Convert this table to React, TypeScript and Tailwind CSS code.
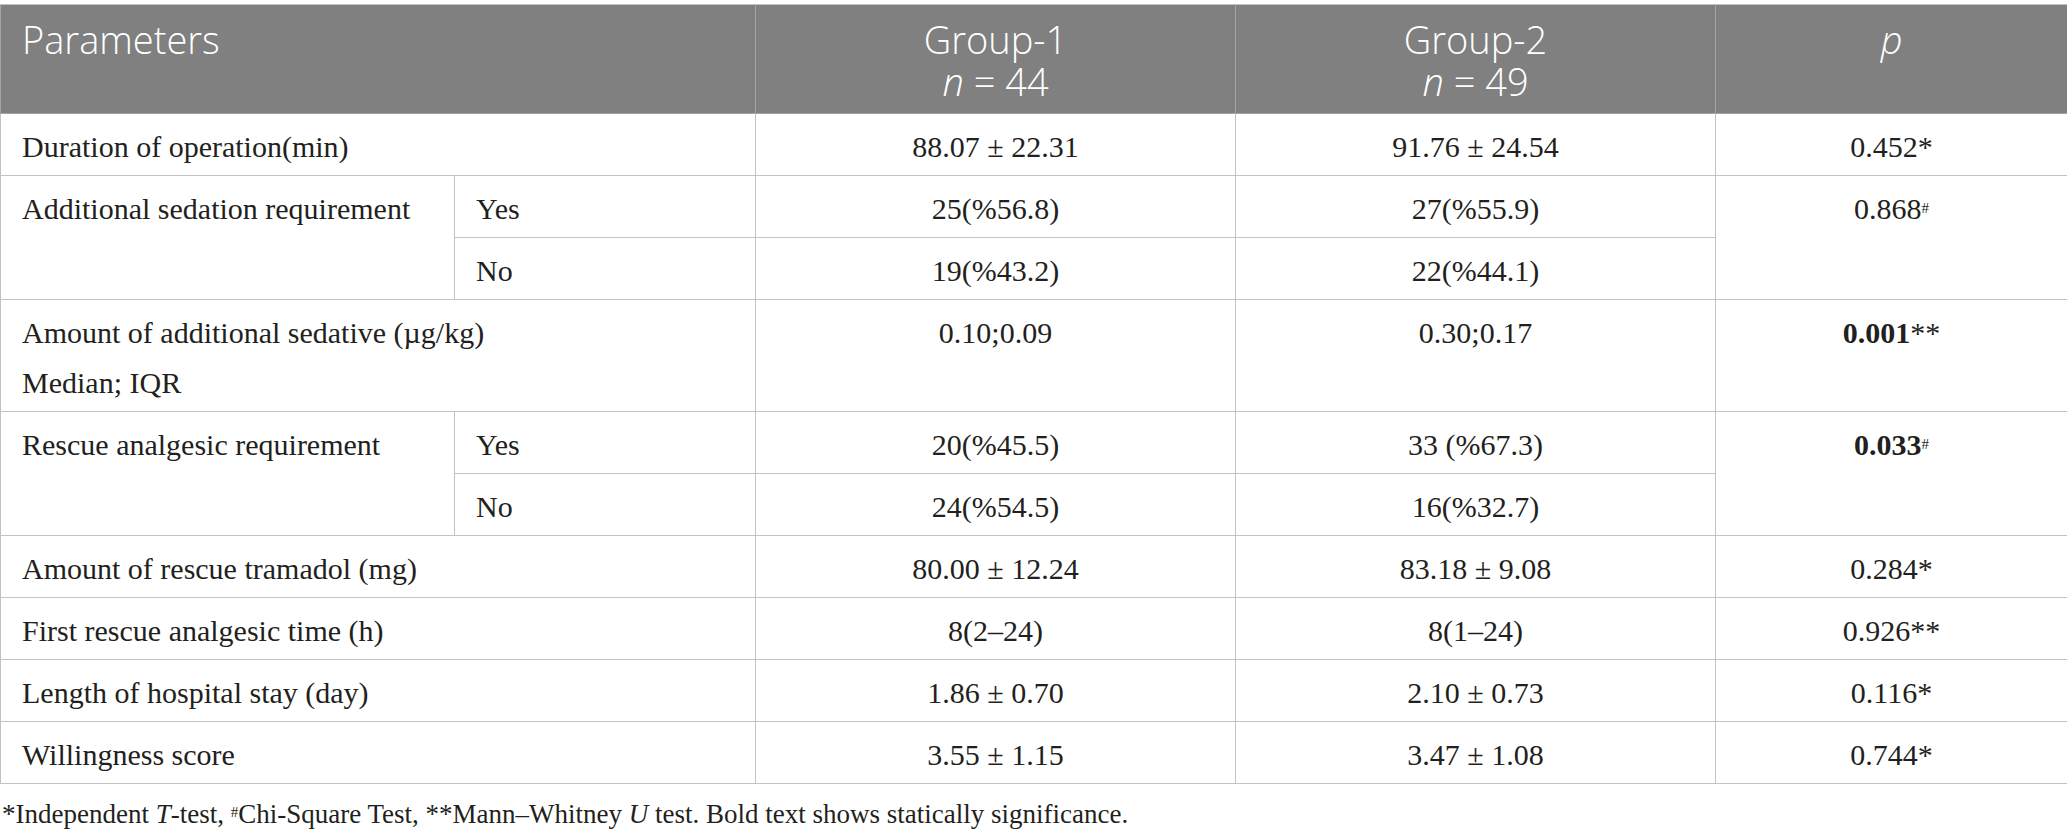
import React from "react";

const serif = "font-['Liberation_Serif','Times_New_Roman',serif]";
const sans = "font-['Open_Sans','Noto_Sans',sans-serif]";

const cell =
  "border border-[#c2c2c2] align-top pt-[8px] pb-[3px] leading-[50px] text-[30px] text-[#231f20]";
const label = `${cell} pl-[21px] text-left`;
const value = `${cell} text-center`;

const Hash = () => (
  <sup className="text-[15px] relative -top-[6px] align-baseline">#</sup>
);

type Row = { name: string; g1: string; g2: string; p: React.ReactNode };

const simpleRows: Row[] = [
  { name: "Amount of rescue tramadol (mg)", g1: "80.00 ± 12.24", g2: "83.18 ± 9.08", p: "0.284*" },
  { name: "First rescue analgesic time (h)", g1: "8(2–24)", g2: "8(1–24)", p: "0.926**" },
  { name: "Length of hospital stay (day)", g1: "1.86 ± 0.70", g2: "2.10 ± 0.73", p: "0.116*" },
  { name: "Willingness score", g1: "3.55 ± 1.15", g2: "3.47 ± 1.08", p: "0.744*" },
];

export default function App() {
  return (
    <div className={`w-[2067px] min-h-[837px] bg-white pt-[4px] ${serif}`}>
      <table className="w-[2067px] table-fixed border-collapse">
        <colgroup>
          <col className="w-[454px]" />
          <col className="w-[301px]" />
          <col className="w-[480px]" />
          <col className="w-[480px]" />
          <col className="w-[352px]" />
        </colgroup>
        <thead>
          <tr className={`bg-[#7f807f] text-white ${sans} font-light text-[38px] leading-[42px]`}>
            <th
              colSpan={2}
              className="border border-[#a3a3a3] border-t-[#c2c2c2] align-top text-left font-light pl-[21px] pt-[13px] pb-[11px]"
            >
              Parameters
            </th>
            <th className="border border-[#a3a3a3] border-t-[#c2c2c2] align-top font-light pt-[13px] pb-[11px]">
              Group-1
              <br />
              <i>n</i> = 44
            </th>
            <th className="border border-[#a3a3a3] border-t-[#c2c2c2] align-top font-light pt-[13px] pb-[11px]">
              Group-2
              <br />
              <i>n</i> = 49
            </th>
            <th className="border border-[#a3a3a3] border-t-[#c2c2c2] align-top font-light pt-[13px] pb-[11px]">
              <i>p</i>
            </th>
          </tr>
        </thead>
        <tbody>
          <tr>
            <td colSpan={2} className={label}>
              Duration of operation(min)
            </td>
            <td className={value}>88.07 ± 22.31</td>
            <td className={value}>91.76 ± 24.54</td>
            <td className={value}>0.452*</td>
          </tr>

          <tr>
            <td rowSpan={2} className={label}>
              Additional sedation requirement
            </td>
            <td className={label}>Yes</td>
            <td className={value}>25(%56.8)</td>
            <td className={value}>27(%55.9)</td>
            <td rowSpan={2} className={value}>
              0.868
              <Hash />
            </td>
          </tr>
          <tr>
            <td className={label}>No</td>
            <td className={value}>19(%43.2)</td>
            <td className={value}>22(%44.1)</td>
          </tr>

          <tr>
            <td colSpan={2} className={label}>
              Amount of additional sedative (µg/kg)
              <br />
              Median; IQR
            </td>
            <td className={value}>0.10;0.09</td>
            <td className={value}>0.30;0.17</td>
            <td className={value}>
              <b>0.001</b>**
            </td>
          </tr>

          <tr>
            <td rowSpan={2} className={label}>
              Rescue analgesic requirement
            </td>
            <td className={label}>Yes</td>
            <td className={value}>20(%45.5)</td>
            <td className={value}>33 (%67.3)</td>
            <td rowSpan={2} className={value}>
              <b>0.033</b>
              <Hash />
            </td>
          </tr>
          <tr>
            <td className={label}>No</td>
            <td className={value}>24(%54.5)</td>
            <td className={value}>16(%32.7)</td>
          </tr>

          {simpleRows.map((r) => (
            <tr key={r.name}>
              <td colSpan={2} className={label}>
                {r.name}
              </td>
              <td className={value}>{r.g1}</td>
              <td className={value}>{r.g2}</td>
              <td className={value}>{r.p}</td>
            </tr>
          ))}
        </tbody>
      </table>

      <p className="mt-[12px] pl-[2px] text-[27px] leading-[36px] text-[#231f20]">
        *Independent <i>T</i>-test, <Hash />Chi-Square Test, **Mann–Whitney <i>U</i> test. Bold
        text shows statically significance.
      </p>
    </div>
  );
}
